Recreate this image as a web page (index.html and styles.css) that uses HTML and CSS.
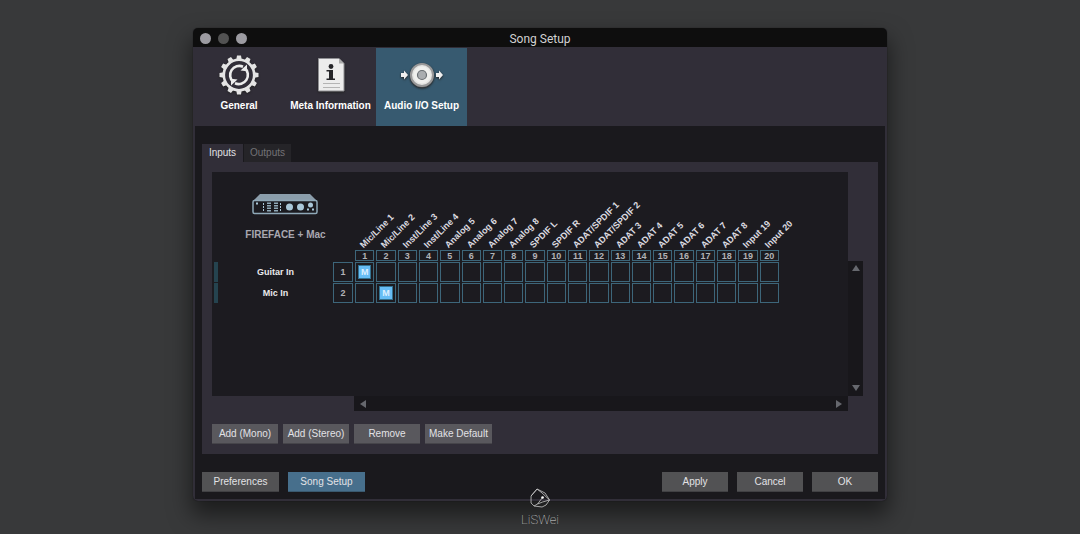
FILE: index.html
```html
<!DOCTYPE html>
<html lang="en">
<head>
<meta charset="utf-8">
<title>Song Setup</title>
<link rel="stylesheet" href="styles.css">
</head>
<body>
<main class="window">
  <header class="titlebar">
    <div class="lights"><button class="light" aria-label="Close"></button><button class="light dim" aria-label="Minimize"></button><button class="light" aria-label="Zoom"></button></div>
    <h1 class="title">Song Setup</h1>
  </header>
  <nav class="toolbar">
    <button class="tool">
      <svg class="tool-icon" viewBox="0 0 40 40" aria-hidden="true">
        <g fill="#e4e4e4">
          <g id="teeth"><path d="M17 6l1-5.500h4l1 5.500zM17 34l1 5.500h4l1-5.500z"/><path d="M6 17l-5.500 1v4l5.500 1zM34 17l5.500 1v4l-5.500 1z"/></g>
          <use href="#teeth" transform="rotate(30 20 20)"/><use href="#teeth" transform="rotate(60 20 20)"/>
        </g>
        <circle cx="20" cy="20" r="15.200" fill="#312e38" stroke="#e4e4e4" stroke-width="2.600"/>
        <g id="turn"><path d="M14.200 27A9.200 9.200 0 0 1 24 11.700" fill="none" stroke="#ececec" stroke-width="2.600"/><path fill="#ececec" d="M28 9.500v6.800l-6.500-.8z"/></g>
        <use href="#turn" transform="rotate(180 20 20)"/>
      </svg>
      <span>General</span>
    </button>
    <button class="tool">
      <svg class="tool-icon" viewBox="0 0 40 40" aria-hidden="true">
        <path d="M7.500 3.500h20.500l5 5v27.500h-25.500z" fill="#ececec" stroke="#8f8f93"/>
        <path d="M28 3.500v5h5z" fill="#aaa"/>
        <circle cx="20" cy="11.500" r="2.400" fill="#242428"/>
        <path d="M15.500 15h6.500v8.500h2v1.500h-8.500v-1.500h2.500v-7h-2.500z" fill="#242428"/>
        <path d="M12 28.500h17M12 32.500h17" stroke="#b4b4b4"/>
      </svg>
      <span>Meta Information</span>
    </button>
    <button class="tool active">
      <svg class="tool-icon wide" viewBox="0 0 46 40" aria-hidden="true">
        <circle cx="23" cy="20.500" r="12" fill="#505052"/>
        <circle cx="23" cy="20" r="11" fill="#e4e4e2" stroke="#99999a" stroke-width="2"/>
        <circle cx="23" cy="20" r="8.500" fill="#f0f0ee"/>
        <circle cx="23" cy="20" r="4.500" fill="#aaadb0" stroke="#6a6f73" stroke-width="1.200"/>
        <path d="M2 18h3v-2.500l4 4.500-4 4.500v-2.500h-3zM37 18h3v-2.500l4 4.500-4 4.500v-2.500h-3z" fill="#f0f0f0"/>
      </svg>
      <span>Audio I/O Setup</span>
    </button>
  </nav>
  <div class="body">
    <div class="tabs" role="tablist"><button class="tab active" role="tab" aria-selected="true">Inputs</button><button class="tab" role="tab" aria-selected="false">Outputs</button></div>
    <section class="panel">
      <div class="workspace">
        <div class="matrix">
          <table class="routing">
            <colgroup><col class="c-mark"><col class="c-name"><col class="c-num"><col span="20"></colgroup>
            <thead>
              <tr class="labels">
                <th colspan="3" rowspan="2" class="device">
                  <svg class="device-icon" viewBox="0 0 66 22" aria-hidden="true">
                    <path d="M8 1h50l7 7H1z" fill="#8b9eab"/>
                    <rect x="1" y="7.500" width="64" height="13" rx="1.500" fill="#1b1b20" stroke="#8fa9b8" stroke-width="1.500"/>
                    <g fill="#a9c7d8"><circle cx="37.500" cy="14" r="3.500"/><circle cx="48.500" cy="14" r="3.500"/><circle cx="58.500" cy="12" r="2.500"/><path d="M4 9.500h2v2H4zM55 15.500h2v2h-2zM60 15.500h2v2h-2zM11 10h1v2h-1zM11 13h1v2h-1zM11 16h1v2h-1zM28 10h1v2h-1zM28 13h1v2h-1zM28 16h1v2h-1z"/></g>
                    <path d="M17 9.500v9M24 9.500v9" stroke="#8fa9b8" stroke-width="4" stroke-dasharray="1.500 1"/>
                  </svg>
                  <span class="device-name">FIREFACE + Mac</span>
                </th>
                <th><span class="slant">Mic/Line 1</span></th><th><span class="slant">Mic/Line 2</span></th><th><span class="slant">Inst/Line 3</span></th><th><span class="slant">Inst/Line 4</span></th><th><span class="slant">Analog 5</span></th><th><span class="slant">Analog 6</span></th><th><span class="slant">Analog 7</span></th><th><span class="slant">Analog 8</span></th><th><span class="slant">SPDIF L</span></th><th><span class="slant">SPDIF R</span></th><th><span class="slant">ADAT/SPDIF 1</span></th><th><span class="slant">ADAT/SPDIF 2</span></th><th><span class="slant">ADAT 3</span></th><th><span class="slant">ADAT 4</span></th><th><span class="slant">ADAT 5</span></th><th><span class="slant">ADAT 6</span></th><th><span class="slant">ADAT 7</span></th><th><span class="slant">ADAT 8</span></th><th><span class="slant">Input 19</span></th><th><span class="slant">Input 20</span></th>
              </tr>
              <tr class="numbers"><th>1</th><th>2</th><th>3</th><th>4</th><th>5</th><th>6</th><th>7</th><th>8</th><th>9</th><th>10</th><th>11</th><th>12</th><th>13</th><th>14</th><th>15</th><th>16</th><th>17</th><th>18</th><th>19</th><th>20</th></tr>
            </thead>
            <tbody>
              <tr><td class="mark"></td><th class="name" scope="row">Guitar In</th><td class="num">1</td><td><button class="cell on">M</button></td><td><button class="cell" aria-label="Guitar In, 2"></button></td><td><button class="cell" aria-label="Guitar In, 3"></button></td><td><button class="cell" aria-label="Guitar In, 4"></button></td><td><button class="cell" aria-label="Guitar In, 5"></button></td><td><button class="cell" aria-label="Guitar In, 6"></button></td><td><button class="cell" aria-label="Guitar In, 7"></button></td><td><button class="cell" aria-label="Guitar In, 8"></button></td><td><button class="cell" aria-label="Guitar In, 9"></button></td><td><button class="cell" aria-label="Guitar In, 10"></button></td><td><button class="cell" aria-label="Guitar In, 11"></button></td><td><button class="cell" aria-label="Guitar In, 12"></button></td><td><button class="cell" aria-label="Guitar In, 13"></button></td><td><button class="cell" aria-label="Guitar In, 14"></button></td><td><button class="cell" aria-label="Guitar In, 15"></button></td><td><button class="cell" aria-label="Guitar In, 16"></button></td><td><button class="cell" aria-label="Guitar In, 17"></button></td><td><button class="cell" aria-label="Guitar In, 18"></button></td><td><button class="cell" aria-label="Guitar In, 19"></button></td><td><button class="cell" aria-label="Guitar In, 20"></button></td></tr>
              <tr><td class="mark"></td><th class="name" scope="row">Mic In</th><td class="num">2</td><td><button class="cell" aria-label="Mic In, 1"></button></td><td><button class="cell on">M</button></td><td><button class="cell" aria-label="Mic In, 3"></button></td><td><button class="cell" aria-label="Mic In, 4"></button></td><td><button class="cell" aria-label="Mic In, 5"></button></td><td><button class="cell" aria-label="Mic In, 6"></button></td><td><button class="cell" aria-label="Mic In, 7"></button></td><td><button class="cell" aria-label="Mic In, 8"></button></td><td><button class="cell" aria-label="Mic In, 9"></button></td><td><button class="cell" aria-label="Mic In, 10"></button></td><td><button class="cell" aria-label="Mic In, 11"></button></td><td><button class="cell" aria-label="Mic In, 12"></button></td><td><button class="cell" aria-label="Mic In, 13"></button></td><td><button class="cell" aria-label="Mic In, 14"></button></td><td><button class="cell" aria-label="Mic In, 15"></button></td><td><button class="cell" aria-label="Mic In, 16"></button></td><td><button class="cell" aria-label="Mic In, 17"></button></td><td><button class="cell" aria-label="Mic In, 18"></button></td><td><button class="cell" aria-label="Mic In, 19"></button></td><td><button class="cell" aria-label="Mic In, 20"></button></td></tr>
            </tbody>
          </table>
        </div>
        <div class="vscroll">
          <button class="arrow" aria-label="Scroll up"><svg viewBox="0 0 8 6"><path d="M4 0l4 6H0z"/></svg></button>
          <button class="arrow" aria-label="Scroll down"><svg viewBox="0 0 8 6"><path d="M0 0h8L4 6z"/></svg></button>
        </div>
        <div class="hscroll">
          <button class="arrow side" aria-label="Scroll left"><svg viewBox="0 0 6 8"><path d="M6 0v8L0 4z"/></svg></button>
          <button class="arrow side" aria-label="Scroll right"><svg viewBox="0 0 6 8"><path d="M0 0l6 4-6 4z"/></svg></button>
        </div>
      </div>
      <div class="actions"><button class="btn">Add (Mono)</button><button class="btn">Add (Stereo)</button><button class="btn">Remove</button><button class="btn">Make Default</button></div>
    </section>
    <footer class="footer">
      <button class="btn dark large">Preferences</button><button class="btn blue large">Song Setup</button>
      <span class="spacer"></span>
      <button class="btn dark">Apply</button><button class="btn dark">Cancel</button><button class="btn dark">OK</button>
    </footer>
  </div>
</main>
<div class="brand">
  <svg class="brand-icon" viewBox="0 0 20 20" aria-hidden="true"><g fill="none" stroke="#c8c8c8" stroke-width=".8"><path d="M7 1L1 8v7l3 3 8 1 4-2 3.500-5L15 5z"/><path d="M7 1l5 4 7.500 7M19.500 12l-7 2-5 2-3.500 2M7.500 16l5-6.500M1 8l6-7"/></g><circle cx="12.500" cy="9.500" r="1.300" fill="#fff"/></svg>
  <span class="brand-name">LiSWei</span>
</div>
</body>
</html>
```
FILE: styles.css
```css
* { box-sizing: border-box; }
body {
  margin: 0;
  min-height: 100vh;
  padding: 28px 193px 33px;
  background: #38393a;
  color: #d6d6da;
  font: 10px/12px "Liberation Sans", Arial, sans-serif;
  overflow: hidden;
}
button { margin: 0; padding: 0; border: 0; background: none; color: inherit; font: inherit; }
svg { display: block; }

.window {
  padding-bottom: 2px;
  border-radius: 5px;
  background: #312e38;
  box-shadow: 0 0 1px #111, 0 12px 22px 2px rgba(0, 0, 0, .5);
}
.titlebar {
  display: grid;
  grid-template-columns: 1fr auto 1fr;
  align-items: center;
  height: 19px;
  padding: 0 7px;
  border-radius: 5px 5px 0 0;
  background: #0e0e0e;
}
.lights { display: flex; gap: 7px; }
.light { width: 11px; height: 11px; border-radius: 50%; background: #9c9ba1; }
.light.dim { background: #525252; }
.title { margin: 0; padding-top: 2px; color: #d2d2d2; font: 12px/19px Roboto, sans-serif; }

.toolbar { display: flex; height: 79px; padding-top: 1px; }
.tool {
  display: flex;
  flex-direction: column;
  align-items: center;
  gap: 5px;
  width: 91px;
  padding-top: 7px;
  color: #fff;
  font-weight: bold;
  white-space: nowrap;
}
.tool:first-child { width: 92px; }
.tool.active { background: #375a70; }
.tool-icon { width: 40px; height: 40px; filter: drop-shadow(0 1px 1px #222); }
.tool-icon.wide { width: 46px; }

.body { margin: 0 2px; padding: 18px 7px 7px; background: #1a191d; }
.tabs { display: flex; gap: 1px; }
.tab { height: 18px; min-width: 47px; background: #252428; color: #737276; }
.tab.active { min-width: 41px; background: #312e38; color: #e0e0e4; }
.panel { padding: 10px; background: #312e38; }

.workspace { display: grid; grid-template-columns: 1fr 15px; margin-right: 5px; }
.matrix { min-height: 224px; padding-right: 67px; background: #1c1b20; }
.routing { width: 100%; table-layout: fixed; border-spacing: 2px 1px; }
.routing th, .routing td { padding: 0; text-align: center; font: bold 9px/9px "Liberation Sans", Arial, sans-serif; }
.c-mark { width: 4px; }
.c-name { width: 111px; }
.c-num { width: 20px; }
.labels { height: 76px; }
.labels th { position: relative; }
.device { vertical-align: top; }
.device-icon { width: 66px; height: 22px; margin: 20px auto 14px 38px; }
.routing .device-name { display: block; padding-left: 4px; color: #a9a8b1; font-size: 10px; line-height: 12px; }
.slant {
  position: absolute;
  bottom: -1px;
  left: 10px;
  transform: rotate(-45deg);
  transform-origin: 0 100%;
  color: #dcdce0;
  white-space: nowrap;
}
.routing .numbers th { height: 11px; border: 1px solid #3d667a; color: #b2b2b7; line-height: 8px; }
.mark { height: 20px; background: #25434f; }
.routing .name { color: #eaeaed; }
.num { height: 20px; border: 1px solid #3d667a; color: #b2b2b7; }
.cell { display: block; width: 100%; height: 20px; border: 1px solid #3d667a; }
.cell.on {
  background: #67bdf5;
  box-shadow: inset 0 0 0 2px #1c1b20, inset 0 0 0 3px #33718f;
  color: #dcefff;
}

.vscroll {
  display: flex;
  flex-direction: column;
  justify-content: space-between;
  margin-top: 89px;
  padding: 4px 0 5px;
  background: #18171b;
}
.hscroll {
  display: flex;
  justify-content: space-between;
  align-items: center;
  height: 15px;
  margin-left: 142px;
  padding: 0 6px;
  background: #18171b;
}
.arrow { display: grid; place-items: center; fill: #66686e; }
.arrow svg { width: 8px; height: 6px; }
.arrow.side svg { width: 6px; height: 8px; }

.actions { display: flex; gap: 5px; margin-top: 13px; }
.btn {
  min-width: 66px;
  height: 20px;
  padding: 0 4px;
  border-bottom: 1px solid #46454a;
  background: #59585d;
  color: #e2e2e6;
  white-space: nowrap;
}
.btn.dark { background: #525254; border-color: #414144; }
.btn.blue { background: #476f8c; border-color: #3a596f; }
.btn.large { min-width: 77px; }
.footer { display: flex; gap: 9px; margin-top: 18px; }
.spacer { flex: 1; margin: 0 -9px; }

.brand {
  position: absolute;
  top: 488px;
  left: 50%;
  display: flex;
  flex-direction: column;
  align-items: center;
  gap: 5px;
  transform: translateX(-50%);
}
.brand-icon { width: 20px; height: 20px; }
.brand-name { color: #d8d8d8; font: 100 13px/14px Roboto, Lato, sans-serif; }
```
